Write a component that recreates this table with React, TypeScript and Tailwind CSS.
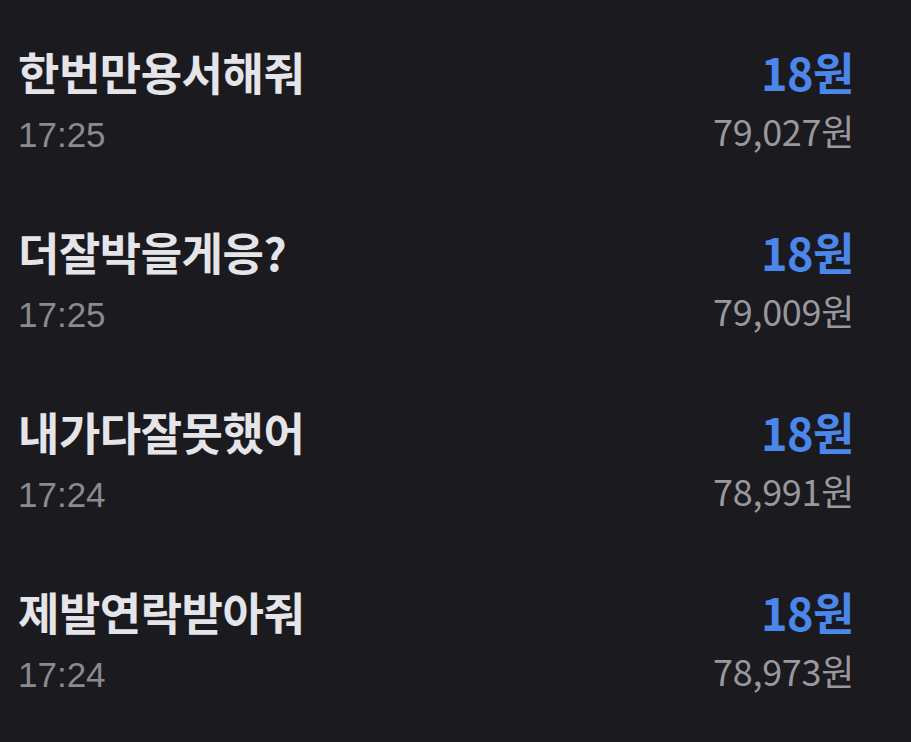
import React from "react";

const rows = [
  { title: "한번만용서해줘", time: "17:25", bal: "79,027원" },
  { title: "더잘박을게응?", time: "17:25", bal: "79,009원" },
  { title: "내가다잘못했어", time: "17:24", bal: "78,991원" },
  { title: "제발연락받아줘", time: "17:24", bal: "78,973원" },
];

export default function App() {
  return (
    <div
      className="w-[911px] h-[742px] bg-[#1a1a1f] overflow-hidden pt-[44px] pl-[18px] pr-[57px]"
      style={{ fontFamily: '"Noto Sans CJK KR", "Liberation Sans", sans-serif' }}
    >
      {rows.map((r, i) => (
        <div key={i} className="flex justify-between h-[180px]">
          <div className="flex flex-col">
            <div className="text-[45px] leading-[56px] font-bold text-[#e4e4e9] tracking-[-0.5px]">{r.title}</div>
            <div className="text-[35px] leading-[44px] text-[#8a8a8f] mt-[13px] font-['Liberation_Sans']">{r.time}</div>
          </div>
          <div className="flex flex-col items-end">
            <div className="text-[45px] leading-[56px] font-bold text-[#4b86ea] tracking-[-0.5px]">18원</div>
            <div className="text-[36px] leading-[44px] text-[#98989d] mt-[8px] tracking-[-0.3px]">{r.bal}</div>
          </div>
        </div>
      ))}
    </div>
  );
}
